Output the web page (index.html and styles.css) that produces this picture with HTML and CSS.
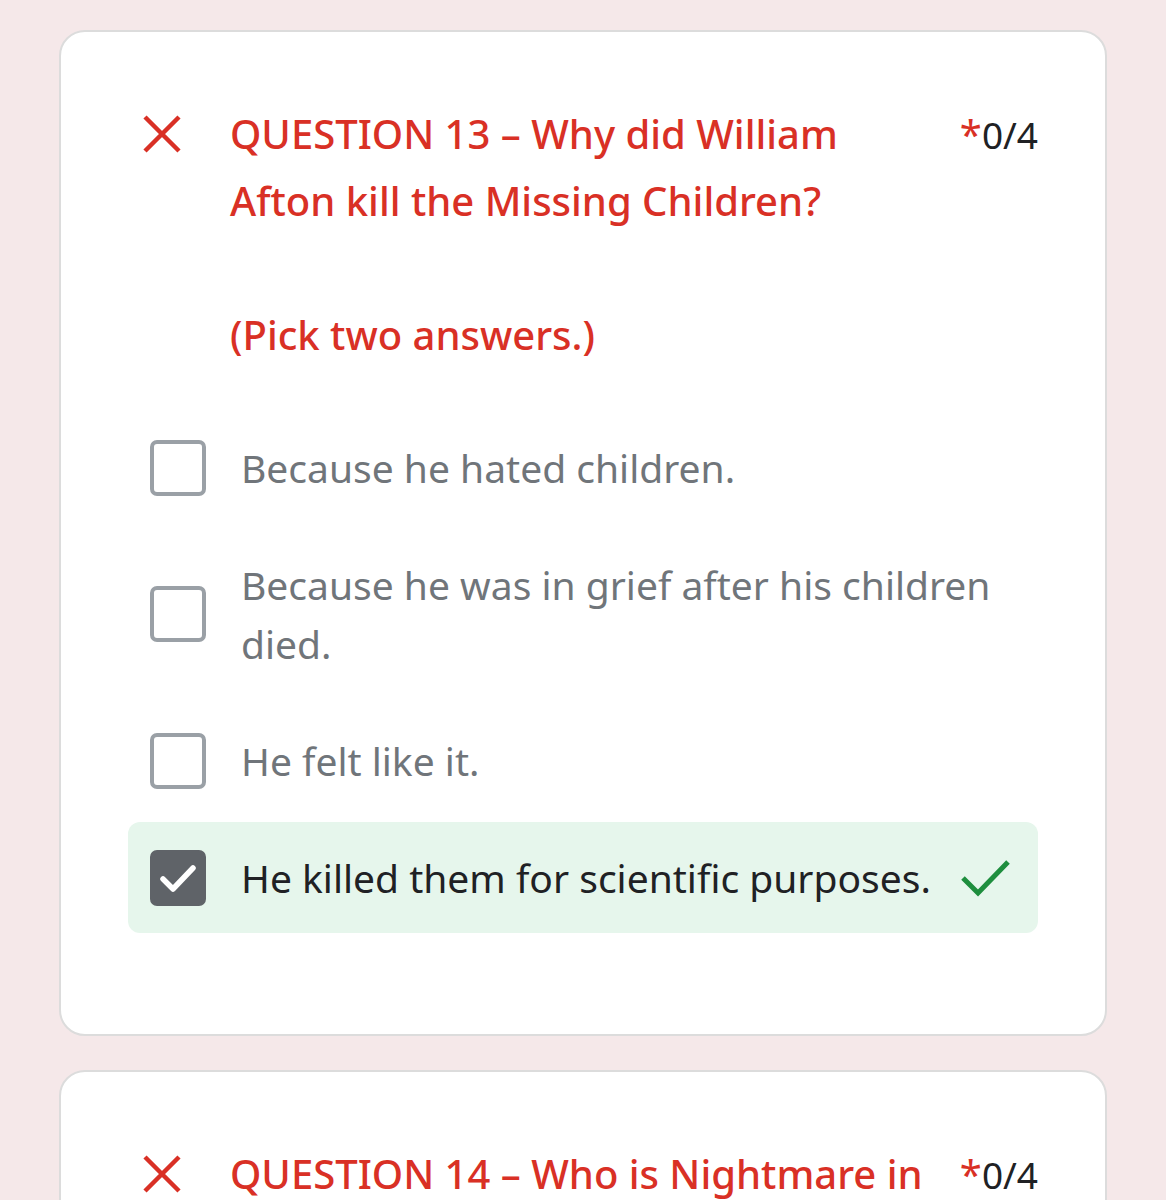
FILE: index.html
```html
<!DOCTYPE html>
<html>
<head>
<meta charset="utf-8">
<link rel="stylesheet" href="styles.css">
</head>
<body>
<div class="page">
  <div class="card">
    <div class="qhead">
      <svg class="xicon" viewBox="0 0 40 40"><path d="M3 3 L37 37 M37 3 L3 37" stroke="#d93025" stroke-width="4.5" fill="none"/></svg>
      <div class="qtitle">QUESTION 13 – Why did William Afton kill the Missing Children?<br><br>(Pick two answers.)</div>
      <div class="score"><span class="star">*</span>0/4</div>
    </div>
    <div class="options">
      <div class="opt">
        <span class="box"></span>
        <span class="otext">Because he hated children.</span>
      </div>
      <div class="opt">
        <span class="box"></span>
        <span class="otext">Because he was in grief after his children died.</span>
      </div>
      <div class="opt">
        <span class="box"></span>
        <span class="otext">He felt like it.</span>
      </div>
      <div class="opt correct">
        <span class="box checked"><svg viewBox="0 0 56 56"><path d="M13 29 L23 39 L43 18" stroke="#fff" stroke-width="5.5" fill="none" stroke-linecap="round" stroke-linejoin="round"/></svg></span>
        <span class="otext">He killed them for scientific purposes.</span>
        <svg class="gcheck" viewBox="0 0 50 40"><path d="M2 20 L17 35 L47 4" stroke="#1e8e3e" stroke-width="5" fill="none"/></svg>
      </div>
    </div>
  </div>
  <div class="card">
    <div class="qhead">
      <svg class="xicon" viewBox="0 0 40 40"><path d="M3 3 L37 37 M37 3 L3 37" stroke="#d93025" stroke-width="4.5" fill="none"/></svg>
      <div class="qtitle">QUESTION 14 – Who is Nightmare in FNAF 4?</div>
      <div class="score"><span class="star">*</span>0/4</div>
    </div>
  </div>
</div>
</body>
</html>
```
FILE: styles.css
```css
html, body {
  margin: 0;
  padding: 0;
  background: #f5e8e9;
}
body {
  font-family: "Noto Sans", "Open Sans", sans-serif;
  height: 1200px;
  overflow: hidden;
}
.page {
  padding: 30px 59px 0 59px;
  display: flex;
  flex-direction: column;
  gap: 34px;
}
.card {
  background: #fff;
  border: 2px solid #dcdcdc;
  border-radius: 26px;
  padding: 68px 67px 101px 67px;
}
.qhead {
  display: flex;
  align-items: flex-start;
  padding-left: 14px;
}
.xicon {
  width: 40px;
  height: 40px;
  margin-top: 14px;
  flex: none;
}
.qtitle {
  flex: 1;
  margin-left: 48px;
  color: #d93025;
  font-size: 40px;
  font-weight: 500;
  line-height: 67px;
  padding-right: 20px;
}
.score {
  flex: none;
  font-size: 37px;
  line-height: 67px;
  color: #202124;
}
.star {
  color: #d93025;
  font-size: 40px;
}
.options {
  margin-top: 44px;
  display: flex;
  flex-direction: column;
  gap: 6px;
}
.opt {
  display: flex;
  align-items: center;
  padding: 26px 22px;
  border-radius: 12px;
}
.box {
  width: 48px;
  height: 48px;
  border: 4px solid #9aa0a6;
  border-radius: 7px;
  flex: none;
  display: flex;
}
.box.checked {
  background: #5f6368;
  border-color: #5f6368;
}
.box svg {
  width: 56px;
  height: 56px;
  margin: -4px;
}
.otext {
  margin-left: 35px;
  font-size: 39px;
  line-height: 59px;
  color: #70757a;
  max-width: 775px;
}
.correct {
  background: #e6f6ec;
}
.correct .otext {
  color: #202124;
}
.gcheck {
  width: 50px;
  height: 40px;
  margin-left: 30px;
  flex: none;
}
```
